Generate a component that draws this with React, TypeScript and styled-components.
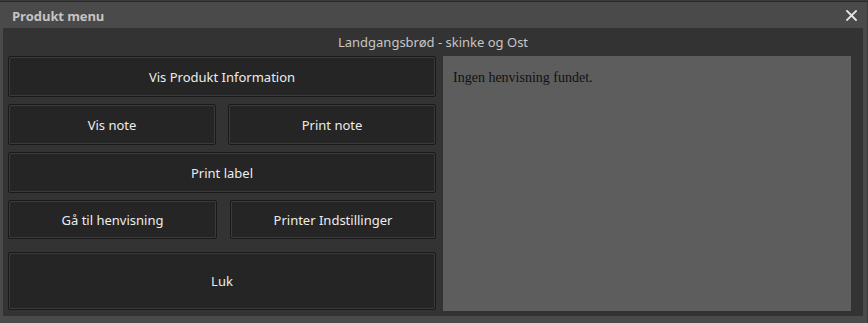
import React from "react";
import styled, { createGlobalStyle } from "styled-components";

const Global = createGlobalStyle`
  html, body { margin: 0; padding: 0; background: #2d2d2d; }
  body { width: 868px; height: 323px; overflow: hidden; font-family: "Noto Sans", "Open Sans", sans-serif; }
  * { box-sizing: border-box; }
`;

const Page = styled.div`
  display: flex;
  flex-direction: column;
  width: 868px;
  height: 323px;
`;

const TopStrip = styled.div`
  height: 2px;
  background: #3a3a3a;
  border-bottom: 1px solid #2a2a2a;
  flex: none;
`;

const Window = styled.div`
  flex: 1;
  display: flex;
  flex-direction: column;
  background: #4a4a4a;
  padding: 0 4px 7px 3px;
  border-right: 1px solid #3a3a3a;
`;

const TitleBar = styled.div`
  height: 26px;
  display: flex;
  align-items: center;
  justify-content: space-between;
  padding: 1px 6px 0 9px;
  flex: none;
`;

const Title = styled.span`
  font-family: "Open Sans", "Noto Sans", sans-serif;
  font-weight: 700;
  font-size: 13px;
  color: #c4c4c4;
  letter-spacing: -0.1px;
`;

const Close = styled.button`
  background: none;
  border: none;
  padding: 0;
  width: 12px;
  height: 12px;
  display: flex;
  align-items: center;
  justify-content: center;
  cursor: pointer;
`;

const Body = styled.div`
  flex: 1;
  background: #333333;
  display: flex;
  flex-direction: column;
`;

const Subtitle = styled.div`
  height: 28px;
  display: flex;
  align-items: center;
  justify-content: center;
  font-size: 13px;
  color: #c6c6c6;
  flex: none;
`;

const Content = styled.div`
  flex: 1;
  display: flex;
  gap: 7px;
  padding: 0 12px 5px 5px;
`;

const LeftCol = styled.div`
  width: 428px;
  display: flex;
  flex-direction: column;
`;

const Row = styled.div<{ $h: number; $mt?: number; $cols?: string; $gap?: number }>`
  height: ${(p) => p.$h}px;
  margin-top: ${(p) => p.$mt ?? 0}px;
  display: grid;
  grid-template-columns: ${(p) => p.$cols ?? "1fr"};
  column-gap: ${(p) => p.$gap ?? 0}px;
  flex: none;
`;

const Btn = styled.button`
  background: #252525;
  border: 1px solid #1a1a1a;
  box-shadow: inset 0 0 0 1px #3a3a3a;
  border-radius: 2px;
  color: #ececec;
  font-family: "Noto Sans", "Open Sans", sans-serif;
  font-size: 13px;
  padding: 0;
  display: flex;
  align-items: center;
  justify-content: center;
  cursor: pointer;
`;

const Panel = styled.div`
  flex: 1;
  background: #5d5d5d;
  padding: 14px 10px;
  font-family: "Liberation Serif", "Times New Roman", serif;
  font-size: 14px;
  color: #111111;
`;

export default function App() {
  return (
    <>
      <Global />
      <Page>
        <TopStrip />
        <Window>
          <TitleBar>
            <Title>Produkt menu</Title>
            <Close aria-label="Luk">
              <svg width="11" height="11" viewBox="0 0 11 11">
                <path d="M1 1 L10 10 M10 1 L1 10" stroke="#e6e6e6" strokeWidth="1.8" strokeLinecap="square" />
              </svg>
            </Close>
          </TitleBar>
          <Body>
            <Subtitle>Landgangsbrød - skinke og Ost</Subtitle>
            <Content>
              <LeftCol>
                <Row $h={41}>
                  <Btn>Vis Produkt Information</Btn>
                </Row>
                <Row $h={41} $mt={7} $cols="208px 208px" $gap={12}>
                  <Btn>Vis note</Btn>
                  <Btn>Print note</Btn>
                </Row>
                <Row $h={41} $mt={7}>
                  <Btn>Print label</Btn>
                </Row>
                <Row $h={39} $mt={7} $cols="209px 206px" $gap={13}>
                  <Btn>Gå til henvisning</Btn>
                  <Btn>Printer Indstillinger</Btn>
                </Row>
                <Row $h={58} $mt={13}>
                  <Btn>Luk</Btn>
                </Row>
              </LeftCol>
              <Panel>Ingen henvisning fundet.</Panel>
            </Content>
          </Body>
        </Window>
      </Page>
    </>
  );
}
